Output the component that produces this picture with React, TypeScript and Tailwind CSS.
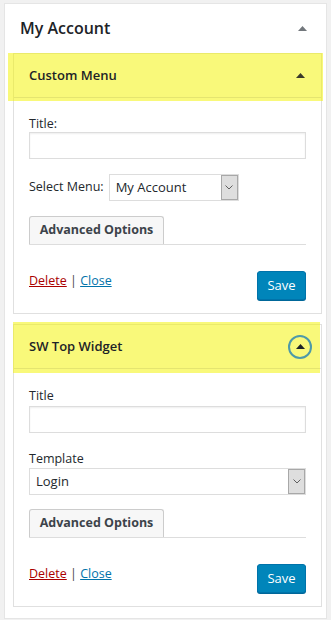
// Sidebar widget area: "My Account" with two expanded widgets (WP admin style).

type WidgetProps = {
  title: string
  focused?: boolean
  highlight: string
  children: React.ReactNode
}

function Caret({ className }: { className: string }) {
  return (
    <svg width="9" height="5" viewBox="0 0 9 5" className={className}>
      <polygon points="0,5 4.5,0 9,5" fill="currentColor" />
    </svg>
  )
}

function Chevron() {
  return (
    <svg width="8" height="5" viewBox="0 0 8 5">
      <polyline points="0.5,0.5 4,4 7.5,0.5" fill="none" stroke="#5f5f5f" strokeWidth="1" />
    </svg>
  )
}

function Widget({ title, focused, highlight, children }: WidgetProps) {
  return (
    <div className="relative border border-[#e0e0e0] bg-white">
      {/* highlight marker sits under the header text but over the box borders */}
      <div className={`pointer-events-none absolute bg-[rgba(244,244,0,0.52)] ${highlight}`} />
      <div className="relative flex h-[44px] items-center justify-between border-b border-[rgba(0,0,0,0.08)] pl-[15px] pr-[9px]">
        <span className="text-[13px] font-semibold text-[#1d2327]">{title}</span>
        {focused ? (
          <span className="flex h-[24px] w-[24px] items-center justify-center rounded-full border-2 border-[#4e9aa8] pb-[1px]">
            <Caret className="text-[#1d2327]" />
          </span>
        ) : (
          <span className="flex w-[24px] justify-center">
            <Caret className="text-[#3a3a2a]" />
          </span>
        )}
      </div>
      <div className="px-[15px] pb-[13px]">{children}</div>
    </div>
  )
}

function TextInput({ className }: { className: string }) {
  return (
    <div className={`h-[27px] w-full border border-[#dddddd] bg-white shadow-[inset_0_1px_2px_rgba(0,0,0,0.07)] ${className}`} />
  )
}

function FakeSelect({ value, className }: { value: string; className: string }) {
  return (
    <div className={`flex h-[27px] items-stretch border border-[#dddddd] bg-white ${className}`}>
      <span className="flex-1 pl-[6px] text-[13px] leading-[25px] text-[#23282d]">{value}</span>
      <span className="flex w-[17px] items-center justify-center border border-[#a8a8a8] bg-[#dedede]">
        <Chevron />
      </span>
    </div>
  )
}

function Footer({ className }: { className: string }) {
  return (
    <div className={`flex items-start justify-between ${className}`}>
      <span className="pt-[1px] text-[12.5px] leading-[18px] text-[#444]">
        <a className="text-[#aa0000] underline">Delete</a> | <a className="text-[#0073aa] underline">Close</a>
      </span>
      <button className="h-[29px] w-[49px] rounded-[3px] border border-[#0073aa] bg-[#0085ba] text-[13px] text-white shadow-[0_1px_0_#006799]">
        Save
      </button>
    </div>
  )
}

function AdvancedOptions({ className }: { className: string }) {
  return (
    <div className={`border-b border-[#dddddd] ${className}`}>
      <div className="flex h-[28px] w-[135px] items-center justify-center rounded-t-[3px] border-x border-t border-[#cccccc] bg-[#f7f7f7] text-[12.5px] font-bold text-[#3c434a]">
        Advanced Options
      </div>
    </div>
  )
}

export default function App() {
  return (
    <div className="h-[620px] w-[331px] bg-[#f1f1f1] px-[4px] pt-[3px] font-['Open_Sans',sans-serif]">
      <div className="h-[616px] border border-[#e5e5e5] bg-white">
        <div className="flex h-[48px] items-center justify-between pl-[15px] pr-[19px]">
          <h2 className="text-[16px] font-semibold text-[#1d2327]">My Account</h2>
          <Caret className="text-[#72777c]" />
        </div>

        <div className="ml-[8px] mr-[4px] flex flex-col gap-[10px] pt-[1px]">
          <Widget title="Custom Menu" highlight="-left-[6px] -right-[2px] -top-[1px] h-[48px]">
            <label className="block pt-[18px] text-[12.5px] leading-[16px] text-[#23282d]">Title:</label>
            <TextInput className="" />
            <div className="mt-[15px] flex items-center gap-[5px]">
              <span className="text-[12.5px] text-[#23282d]">Select Menu:</span>
              <FakeSelect value="My Account" className="w-[130px]" />
            </div>
            <AdvancedOptions className="mt-[15px]" />
            <Footer className="mt-[26px]" />
          </Widget>

          <Widget title="SW Top Widget" focused highlight="-left-[1px] right-[1px] -top-[3px] h-[51px]">
            <label className="block pt-[19px] text-[12.5px] leading-[16px] text-[#23282d]">Title</label>
            <TextInput className="mt-[2px]" />
            <label className="mt-[18px] block text-[12.5px] leading-[16px] text-[#23282d]">Template</label>
            <FakeSelect value="Login" className="mt-[1px] w-full" />
            <AdvancedOptions className="mt-[14px]" />
            <Footer className="mt-[26px]" />
          </Widget>
        </div>
      </div>
    </div>
  )
}
